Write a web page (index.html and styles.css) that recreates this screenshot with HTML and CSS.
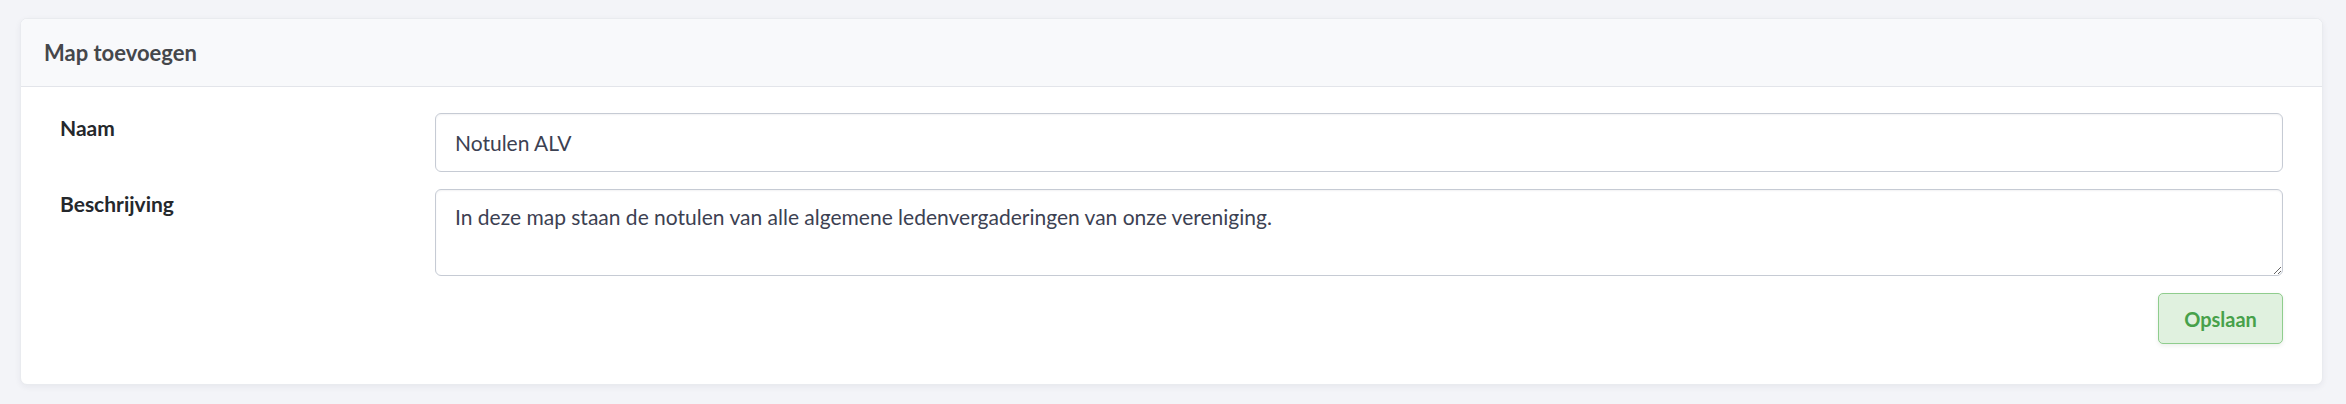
FILE: index.html
```html
<!DOCTYPE html>
<html lang="nl">

<head>
  <meta charset="UTF-8">
  <meta name="viewport" content="width=device-width, initial-scale=1.0">
  <title>Map toevoegen</title>
  <link rel="stylesheet" href="styles.css">
</head>

<body>
  <div class="card">
    <div class="card-header">Map toevoegen</div>
    <form class="card-body">
      <div class="form-row">
        <label for="naam">Naam</label>
        <input type="text" id="naam" name="naam" value="Notulen ALV">
      </div>
      <div class="form-row">
        <label for="beschrijving">Beschrijving</label>
        <textarea id="beschrijving" name="beschrijving">In deze map staan de notulen van alle algemene ledenvergaderingen van onze vereniging.</textarea>
      </div>
      <div class="form-actions">
        <button type="button" class="btn-save">Opslaan</button>
      </div>
    </form>
  </div>
</body>

</html>
```

FILE: styles.css
```css
body {
  margin: 0;
  padding: 18px 23px 20px 20px;
  background-color: #f3f4f8;
  font-family: Lato, "Open Sans", sans-serif;
  font-size: 21px;
  color: #212529;
}

.card {
  background-color: #ffffff;
  border: 1px solid #e9ebef;
  border-radius: 7px;
  box-shadow: 0 2px 6px rgba(30, 40, 70, 0.06);
  overflow: hidden;
}

.card-header {
  background-color: #f8f9fb;
  border-bottom: 1px solid #e3e5ea;
  padding: 17px 23px;
  line-height: 33px;
  font-size: 22px;
  font-weight: 700;
  color: #45474b;
}

.card-body {
  padding: 26px 39px 40px 39px;
}

.form-row {
  display: grid;
  grid-template-columns: 360px 1fr;
  column-gap: 15px;
  margin-bottom: 17px;
}

label {
  font-weight: 700;
  color: #25282c;
  line-height: 30px;
  padding-top: 0;
}

input,
textarea {
  font-family: inherit;
  font-size: 21px;
  color: #3c4152;
  border: 1px solid #c6cbd4;
  border-radius: 6px;
  padding: 13px 19px;
  line-height: 31px;
  box-shadow: inset 0 1px 2px rgba(30, 40, 70, 0.06);
  outline: none;
  margin: 0;
}

input {
  height: 59px;
  box-sizing: border-box;
}

textarea {
  height: 87px;
  box-sizing: border-box;
  padding-top: 11px;
  resize: vertical;
}

.form-actions {
  display: flex;
  justify-content: flex-end;
}

.btn-save {
  font-family: inherit;
  font-size: 20px;
  font-weight: 700;
  color: #47a14a;
  background-color: #e0f1df;
  border: 1px solid #8fcd8d;
  border-radius: 5px;
  width: 125px;
  height: 51px;
  box-shadow: 0 2px 4px rgba(30, 60, 30, 0.08);
  cursor: pointer;
}
```
